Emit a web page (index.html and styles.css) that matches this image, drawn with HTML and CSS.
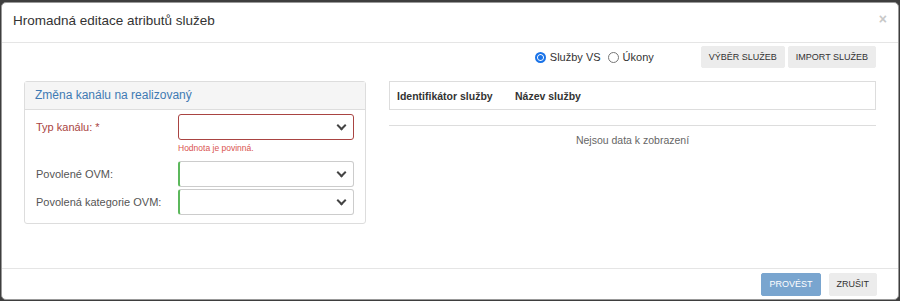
FILE: index.html
```html
<!DOCTYPE html>
<html>
<head>
  <title>Hromadná editace atributů služeb</title>
  <link rel="stylesheet" href="styles.css">
</head>
<body>
  <div class="modal">
    <div class="modal-header">
      <h4 class="modal-title">Hromadná editace atributů služeb</h4>
      <span class="close">&times;</span>
    </div>

    <div class="modal-body">
      <div class="toolbar">
        <label class="radio"><span class="radio-dot checked"></span>Služby VS</label>
        <label class="radio"><span class="radio-dot"></span>Úkony</label>
        <div class="toolbar-buttons">
          <button class="btn">Výběr služeb</button>
          <button class="btn">Import služeb</button>
        </div>
      </div>

      <div class="columns">
        <div class="panel">
          <div class="panel-heading">Změna kanálu na realizovaný</div>
          <div class="panel-body">
            <div class="form-row invalid">
              <label>Typ kanálu: *</label>
              <div class="field">
                <div class="select"><span class="chevron"></span></div>
                <div class="help">Hodnota je povinná.</div>
              </div>
            </div>
            <div class="form-row valid">
              <label>Povolené OVM:</label>
              <div class="field">
                <div class="select"><span class="chevron"></span></div>
              </div>
            </div>
            <div class="form-row valid">
              <label>Povolená kategorie OVM:</label>
              <div class="field">
                <div class="select"><span class="chevron"></span></div>
              </div>
            </div>
          </div>
        </div>

        <div class="grid">
          <div class="grid-header">
            <span class="col-id">Identifikátor služby</span>
            <span class="col-name">Název služby</span>
          </div>
          <div class="grid-empty">Nejsou data k zobrazení</div>
        </div>
      </div>
    </div>

    <div class="modal-footer">
      <button class="btn btn-primary">Provést</button>
      <button class="btn">Zrušit</button>
    </div>
  </div>
</body>
</html>
```

FILE: styles.css
```css
body {
  margin: 0;
  height: 301px;
  overflow: hidden;
  background: #3e3e3e;
  font-family: 'Liberation Sans', Arial, sans-serif;
  font-size: 11px;
  color: #333;
}
.modal {
  box-sizing: border-box;
  margin: 2px 0 0 1px;
  width: 898px;
  height: 298px;
  background: #fff;
  border: 1px solid #999;
  border-radius: 5px;
  display: flex;
  flex-direction: column;
}
.modal-header {
  height: 39px;
  border-bottom: 1px solid #e5e5e5;
  display: flex;
  align-items: flex-start;
  justify-content: space-between;
  padding: 0 11px 0 11px;
}
.modal-title {
  margin: 10px 0 0;
  font-size: 13.5px;
  font-weight: normal;
  color: #333;
}
.close {
  color: #c8c8c8;
  font-size: 14px;
  font-weight: bold;
  margin-top: 8px;
}
.modal-body {
  flex: 1;
  padding: 3px 22px 0 22px;
}
.toolbar {
  display: flex;
  align-items: center;
  justify-content: flex-end;
  height: 22px;
}
.radio {
  display: flex;
  align-items: center;
  margin-right: 7px;
  color: #333;
}
.radio-dot {
  box-sizing: border-box;
  width: 11px;
  height: 11px;
  border: 1px solid #767676;
  border-radius: 50%;
  margin-right: 4px;
}
.radio-dot.checked {
  border: 2px solid #1a73e8;
  background: #1a73e8;
  box-shadow: inset 0 0 0 1px #fff;
}
.toolbar-buttons {
  display: flex;
  gap: 3px;
  margin-left: 40px;
}
.btn {
  font-family: inherit;
  font-size: 9px;
  text-transform: uppercase;
  color: #333;
  background: #ececec;
  border: 1px solid #ececec;
  border-radius: 2px;
  height: 22px;
  padding: 0 7px;
  cursor: pointer;
}
.btn-primary {
  background: #79a5cf;
  border-color: #79a5cf;
  color: #fff;
}
.columns {
  display: flex;
  gap: 23px;
  margin-top: 13px;
}
.panel {
  width: 342px;
  box-sizing: border-box;
  border: 1px solid #ddd;
  border-radius: 3px;
}
.panel-heading {
  height: 27px;
  line-height: 27px;
  background: #f5f5f5;
  border-bottom: 1px solid #ddd;
  padding: 0 10px;
  color: #3f7ab3;
  font-size: 12px;
}
.panel-body {
  padding: 4px 11px 8px 11px;
  display: flex;
  flex-direction: column;
  gap: 2px;
}
.form-row {
  display: flex;
}
.form-row label {
  width: 142px;
  line-height: 26px;
  color: #555;
}
.field {
  flex: 1;
}
.select {
  box-sizing: border-box;
  height: 26px;
  border: 1px solid #ccc;
  border-radius: 3px;
  display: flex;
  align-items: center;
  justify-content: flex-end;
  padding-right: 5px;
}
.chevron {
  width: 5px;
  height: 5px;
  border-right: 2px solid #444;
  border-bottom: 2px solid #444;
  transform: rotate(45deg);
  margin: -4px 3px 0 0;
}
.invalid label {
  color: #a94442;
}
.invalid .select {
  border-color: #a94442;
}
.valid .select {
  border-left: 2px solid #5cb85c;
}
.help {
  color: #d9534f;
  font-size: 8.5px;
  margin: 3px 0 6px;
}
.grid {
  flex: 1;
}
.grid-header {
  box-sizing: border-box;
  height: 29px;
  border: 1px solid #ddd;
  display: flex;
  align-items: center;
  font-weight: bold;
  font-size: 10.5px;
}
.col-id {
  margin-left: 7px;
  width: 118px;
}
.grid-empty {
  margin-top: 15px;
  border-top: 1px solid #ddd;
  text-align: center;
  color: #666;
  font-size: 10.5px;
  padding-top: 8px;
}
.modal-footer {
  height: 30px;
  border-top: 1px solid #e5e5e5;
  display: flex;
  align-items: center;
  justify-content: flex-end;
  gap: 8px;
  padding-right: 21px;
}
.modal-footer .btn {
  height: 23px;
  font-size: 9px;
}
```
